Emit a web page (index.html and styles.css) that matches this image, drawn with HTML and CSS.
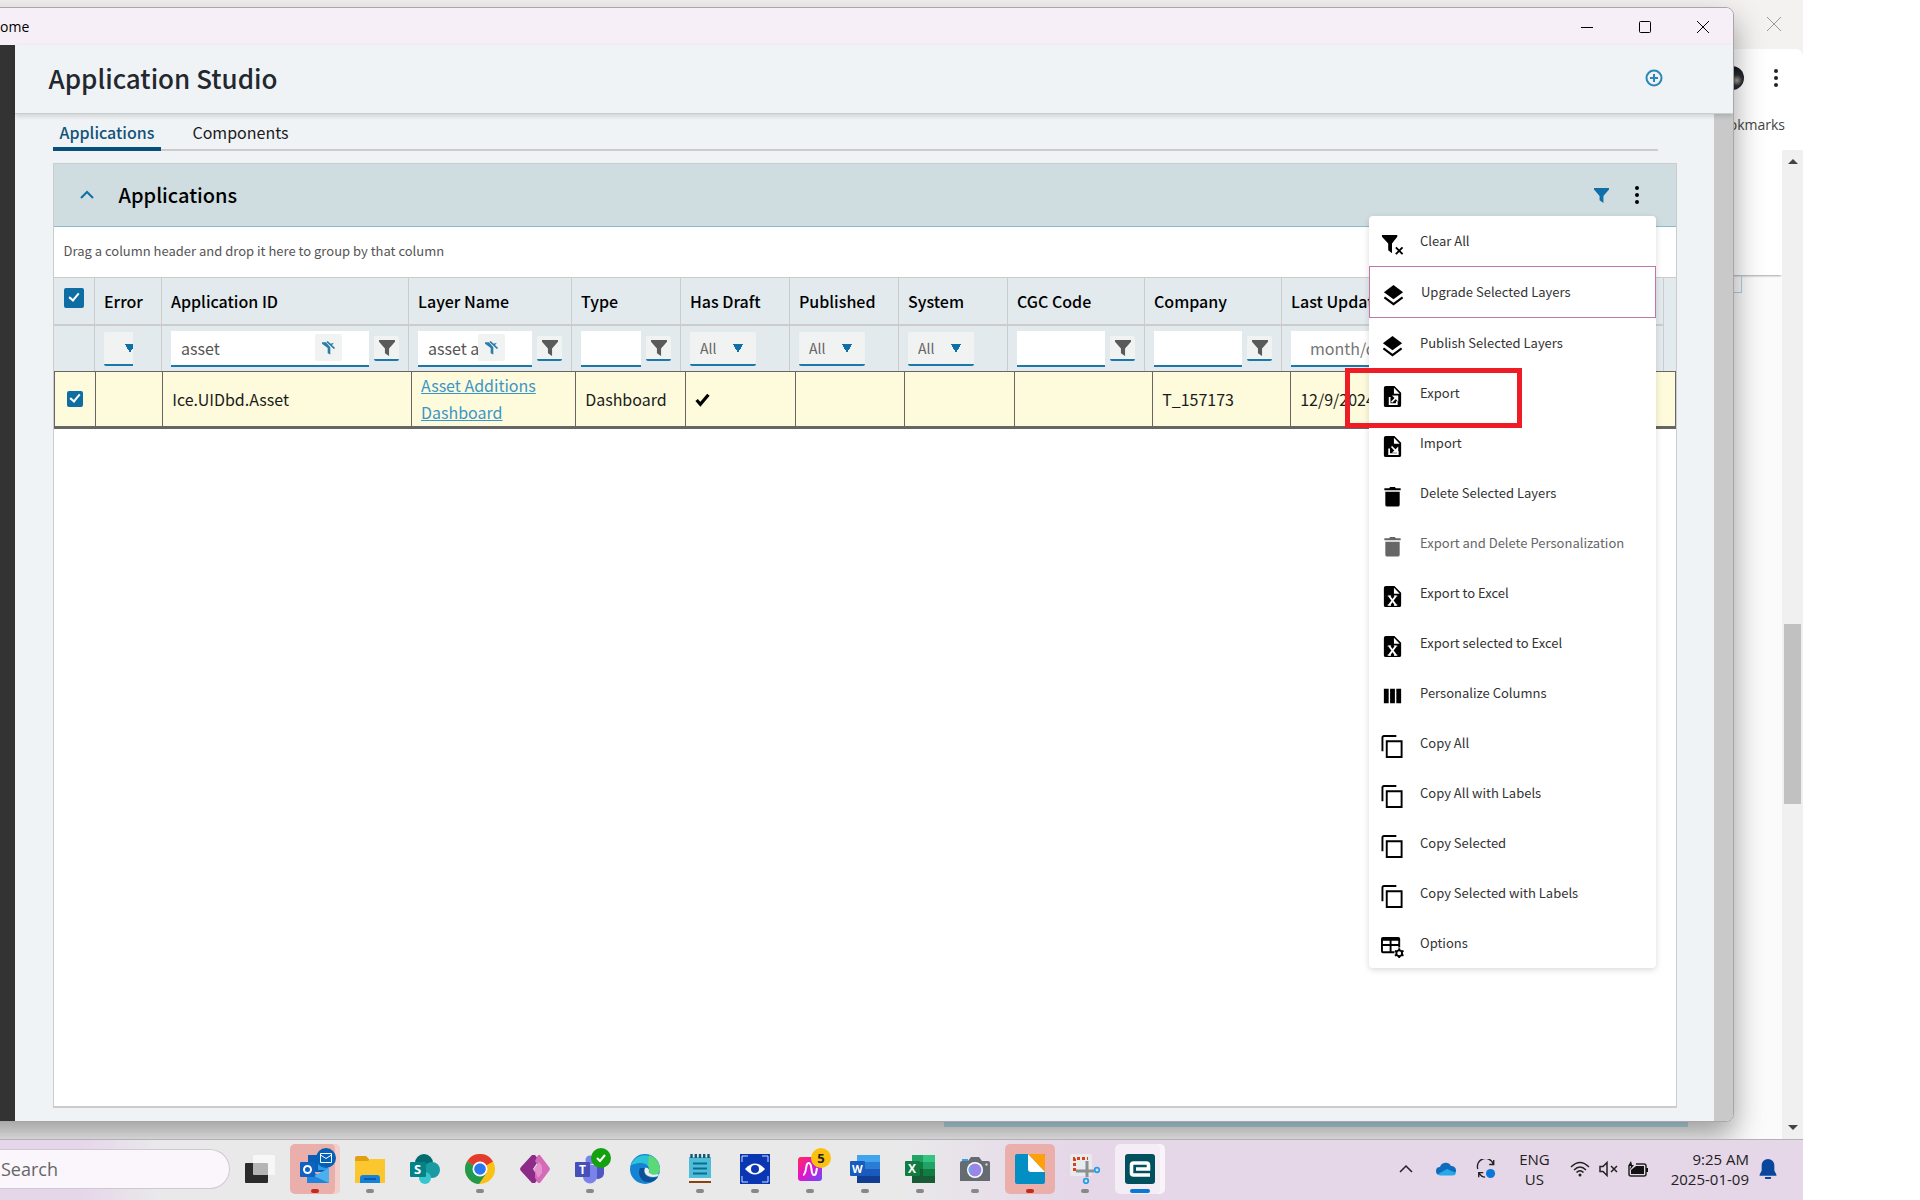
FILE: index.html
```html
<html lang="en">
    <head>
        <meta charset="UTF-8" />
        <meta name="viewport" content="width=device-width, initial-scale=1.0" />
        <title>Application Studio</title>
        <link rel="stylesheet" href="styles.css" />
    </head>
    <body>
        <svg class="sprite">
            <symbol id="filter" viewBox="1 1 14 14">
                <path d="M1 1h14v1.500L9.800 8.500V15L6.200 12.500V8.500L1 2.500z" />
            </symbol>
            <symbol id="clear-filter" viewBox="0 0 16 16">
                <path d="M0 1.500h4.500l5 5.500v8.500l-3-1.500V8L0 3z" />
                <path d="M5 1l1.500-1 8.500 8-1.500 1zM9 3.500L13.500 2l-3 4z" />
            </symbol>
            <symbol id="layers" viewBox="0 0 24 24">
                <path d="M12 1l10 7.500-10 7.500-10-7.500z" />
                <path d="M2.500 14l9.500 7 9.500-7" fill="none" stroke="currentColor" stroke-width="2.200" />
            </symbol>
            <symbol id="file-export" viewBox="0 0 24 24">
                <path fill-rule="evenodd" d="M5 1h9l7 7v13a2 2 0 0 1-2 2H5a2 2 0 0 1-2-2V3a2 2 0 0 1 2-2zm8.500 1.800V9h6z" />
                <path d="M9 12.500v7.500h7.500v-3M11 18l5-5" fill="none" stroke="#fff" stroke-width="1.800" />
                <path d="M11.500 11H18v6.500z" fill="#fff" />
            </symbol>
            <symbol id="file-import" viewBox="0 0 24 24">
                <path fill-rule="evenodd" d="M5 1h9l7 7v13a2 2 0 0 1-2 2H5a2 2 0 0 1-2-2V3a2 2 0 0 1 2-2zm8.500 1.800V9h6z" />
                <path d="M8.500 14v6h9v-3M11 12l5 5" fill="none" stroke="#fff" stroke-width="1.800" />
                <path d="M18 12v6.500h-6.500z" fill="#fff" />
            </symbol>
            <symbol id="file-excel" viewBox="0 0 24 24">
                <path fill-rule="evenodd" d="M5 1h9l7 7v13a2 2 0 0 1-2 2H5a2 2 0 0 1-2-2V3a2 2 0 0 1 2-2zm8.500 1.800V9h6z" />
                <path d="M8.500 11.500l7 9.500M15.500 11.500l-7 9.500" stroke="#fff" stroke-width="2" />
                <path d="M7 11.500h3.500M13.500 11.500H17M7 21h3.500M13.500 21H17" stroke="#fff" stroke-width="1.200" />
            </symbol>
            <symbol id="trash" viewBox="0 0 24 24">
                <path d="M3.500 3.500h5l1-1.500h5l1 1.500h5V5.500h-17zM4.500 7h15v13.500a2 2 0 0 1-2 2h-11a2 2 0 0 1-2-2z" />
            </symbol>
            <symbol id="columns" viewBox="0 0 24 24">
                <path d="M3 4h5v15H3zM9.500 4h5v15h-5zM16 4h5v15h-5z" />
            </symbol>
            <symbol id="copy" viewBox="0 0 24 24">
                <path d="M1.500 17V2.500a1.500 1.500 0 0 1 1.500-1.500h13M6 6.500h15.500V23H6z" fill="none" stroke="currentColor" stroke-width="2" />
            </symbol>
        </svg>

        <div class="desktop">
            <div class="screen">
                <div class="browser">
                    <div class="browser-tabs">
                        <button class="browser-close" aria-label="Close browser">
                            <svg viewBox="0 0 14 14"><path d="M0 0l14 14M14 0L0 14" /></svg>
                        </button>
                    </div>
                    <div class="browser-bar">
                        <span class="avatar"></span>
                        <button class="dots" aria-label="Browser menu"><i></i><i></i><i></i></button>
                    </div>
                    <div class="bookmarks"><span>All Bookmarks</span></div>
                    <div class="browser-page">
                        <div class="page-content">
                            <div class="page-card"></div>
                            <div class="page-field"></div>
                            <div class="page-strip"></div>
                        </div>
                        <div class="scrollbar">
                            <span class="arrow-up"></span>
                            <span class="thumb"></span>
                            <span class="arrow-down"></span>
                        </div>
                    </div>
                </div>

                <div class="window">
                    <div class="title-bar">
                        <span class="window-title">ome</span>
                        <button aria-label="Minimize"><svg viewBox="0 0 14 14"><path d="M1 7.500h12" /></svg></button>
                        <button aria-label="Maximize"><svg viewBox="0 0 14 14"><rect x="1.500" y="1.500" width="11" height="11" rx="1" /></svg></button>
                        <button aria-label="Close"><svg viewBox="0 0 14 14"><path d="M1 1l12 12M13 1L1 13" /></svg></button>
                    </div>
                    <div class="window-body">
                        <div class="side"></div>
                        <div class="main">
                            <header class="page-header">
                                <h1>Application Studio</h1>
                                <button class="add" aria-label="Add">
                                    <svg viewBox="0 0 18 18"><circle cx="9" cy="9" r="7.500" /><path d="M9 5v8M5 9h8" /></svg>
                                </button>
                            </header>
                            <div class="scroll-area">
                                <div class="content">
                                    <nav class="tabs">
                                        <a class="tab active" href="#applications">Applications</a>
                                        <a class="tab" href="#components">Components</a>
                                    </nav>
                                    <section class="panel">
                                        <div class="panel-header">
                                            <button class="collapse" aria-label="Collapse">
                                                <svg viewBox="0 0 16 16"><path d="M2 11l6-6 6 6" /></svg>
                                            </button>
                                            <h2>Applications</h2>
                                            <button class="panel-filter" aria-label="Filter"><svg><use href="#filter" /></svg></button>
                                            <button class="dots" aria-label="More"><i></i><i></i><i></i></button>
                                            <div class="menu">
                                                <button><svg viewBox="0 0 24 24"><path d="M1 2h16v2l-5.500 7v10L7.500 18v-7L1 4z" /><path d="M15.500 15l7 7M22.500 15l-7 7" stroke="currentColor" stroke-width="2" /></svg>Clear All</button>
                                                <button class="focused"><svg><use href="#layers" /></svg>Upgrade Selected Layers</button>
                                                <button><svg><use href="#layers" /></svg>Publish Selected Layers</button>
                                                <button class="marked"><svg><use href="#file-export" /></svg>Export</button>
                                                <button><svg><use href="#file-import" /></svg>Import</button>
                                                <button><svg><use href="#trash" /></svg>Delete Selected Layers</button>
                                                <button disabled><svg><use href="#trash" /></svg>Export and Delete Personalization</button>
                                                <button><svg><use href="#file-excel" /></svg>Export to Excel</button>
                                                <button><svg><use href="#file-excel" /></svg>Export selected to Excel</button>
                                                <button><svg><use href="#columns" /></svg>Personalize Columns</button>
                                                <button><svg><use href="#copy" /></svg>Copy All</button>
                                                <button><svg><use href="#copy" /></svg>Copy All with Labels</button>
                                                <button><svg><use href="#copy" /></svg>Copy Selected</button>
                                                <button><svg><use href="#copy" /></svg>Copy Selected with Labels</button>
                                                <button>
                                                    <svg viewBox="0 0 24 24">
                                                        <path fill-rule="evenodd" d="M2 2h16a2 2 0 0 1 2 2v9h-2v-1.500h-7V17h3v2H2a2 2 0 0 1-2-2V4a2 2 0 0 1 2-2zm0 4v3.500h7V6zm9 0v3.500h7V6zm-9 5.500V17h7v-5.500z" />
                                                        <circle cx="19" cy="19" r="3" fill="none" stroke="currentColor" stroke-width="2" />
                                                        <path d="M19 13.800v2M19 22v2.200M14.500 16.400l1.800 1M21.700 20.600l1.800 1M14.500 21.600l1.800-1M21.700 17.400l1.800-1" stroke="currentColor" stroke-width="2" />
                                                    </svg>Options
                                                </button>
                                            </div>
                                        </div>
                                        <div class="group-hint">Drag a column header and drop it here to group by that column</div>
                                        <div class="grid-head">
                                            <table>
                                                <colgroup>
                                                    <col class="c-check" /><col class="c-error" /><col class="c-id" /><col class="c-layer" />
                                                    <col class="c-flag" /><col class="c-flag" /><col class="c-flag" /><col class="c-flag" />
                                                    <col class="c-code" /><col class="c-code" /><col class="c-updated" />
                                                </colgroup>
                                                <tr class="names">
                                                    <th class="check"><input type="checkbox" class="big" aria-label="Select all" checked /></th>
                                                    <th>Error</th>
                                                    <th>Application ID</th>
                                                    <th>Layer Name</th>
                                                    <th>Type</th>
                                                    <th>Has Draft</th>
                                                    <th>Published</th>
                                                    <th>System</th>
                                                    <th>CGC Code</th>
                                                    <th>Company</th>
                                                    <th>Last Updated</th>
                                                </tr>
                                                <tr class="filters">
                                                    <td></td>
                                                    <td><div class="filter narrow"><select aria-label="Error"><option></option></select></div></td>
                                                    <td>
                                                        <div class="filter">
                                                            <div class="field">
                                                                <input type="text" aria-label="Application ID" value="asset" />
                                                                <button class="clear" aria-label="Clear"><svg><use href="#clear-filter" /></svg></button>
                                                            </div>
                                                            <button class="funnel" aria-label="Filter"><svg><use href="#filter" /></svg></button>
                                                        </div>
                                                    </td>
                                                    <td>
                                                        <div class="filter">
                                                            <div class="field">
                                                                <input type="text" aria-label="Layer Name" value="asset additions" />
                                                                <button class="clear" aria-label="Clear"><svg><use href="#clear-filter" /></svg></button>
                                                            </div>
                                                            <button class="funnel" aria-label="Filter"><svg><use href="#filter" /></svg></button>
                                                        </div>
                                                    </td>
                                                    <td>
                                                        <div class="filter">
                                                            <div class="field"><input type="text" aria-label="Type" /></div>
                                                            <button class="funnel" aria-label="Filter"><svg><use href="#filter" /></svg></button>
                                                        </div>
                                                    </td>
                                                    <td><div class="filter"><select aria-label="Has Draft"><option>All</option></select></div></td>
                                                    <td><div class="filter"><select aria-label="Published"><option>All</option></select></div></td>
                                                    <td><div class="filter"><select aria-label="System"><option>All</option></select></div></td>
                                                    <td>
                                                        <div class="filter">
                                                            <div class="field"><input type="text" aria-label="CGC Code" /></div>
                                                            <button class="funnel" aria-label="Filter"><svg><use href="#filter" /></svg></button>
                                                        </div>
                                                    </td>
                                                    <td>
                                                        <div class="filter">
                                                            <div class="field"><input type="text" aria-label="Company" /></div>
                                                            <button class="funnel" aria-label="Filter"><svg><use href="#filter" /></svg></button>
                                                        </div>
                                                    </td>
                                                    <td><div class="filter date"><div class="field"><input type="text" aria-label="Last Updated" placeholder="month/day/year" /></div></div></td>
                                                </tr>
                                            </table>
                                        </div>
                                        <table class="grid-rows">
                                            <colgroup>
                                                <col class="c-check" /><col class="c-error" /><col class="c-id" /><col class="c-layer" />
                                                <col class="c-flag" /><col class="c-flag" /><col class="c-flag" /><col class="c-flag" />
                                                <col class="c-code" /><col class="c-code" /><col class="c-updated" />
                                            </colgroup>
                                            <tr>
                                                <td class="check"><input type="checkbox" aria-label="Select row" checked /></td>
                                                <td></td>
                                                <td>Ice.UIDbd.Asset</td>
                                                <td><a href="#layer">Asset Additions Dashboard</a></td>
                                                <td>Dashboard</td>
                                                <td><svg class="tick" viewBox="0 0 14 14"><path d="M1.500 7.500l3.500 4 7.500-9" /></svg></td>
                                                <td></td>
                                                <td></td>
                                                <td></td>
                                                <td>T_157173</td>
                                                <td>12/9/2024</td>
                                            </tr>
                                        </table>
                                    </section>
                                </div>
                                <div class="window-scroll"></div>
                            </div>
                        </div>
                    </div>
                </div>
            </div>

            <div class="taskbar">
                <input class="search" type="text" placeholder="Search" aria-label="Search" />
                <div class="apps">
                    <button class="app" aria-label="Task view">
                        <svg viewBox="0 0 30 30"><rect x="0" y="9" width="23" height="20" rx="1" fill="#2b2b2b" /><rect x="8" y="1" width="22" height="20" rx="1" fill="#fff" fill-opacity=".65" /></svg>
                    </button>
                    <button class="app alert stacked running" aria-label="Outlook">
                        <svg viewBox="0 0 30 30"><path d="M8 1h20v17H8z" fill="#0a5fb4" /><path d="M18 7h10v9H18z" fill="#2f9be8" /><path d="M7 14l11 7 11-7v15H7z" fill="#1f86dc" /><path d="M29 14v15L14 22z" fill="#4ab0ee" /><rect y="8" width="15" height="15" rx="1" fill="#0f62c0" /><circle cx="7.500" cy="15.500" r="3.500" fill="none" stroke="#fff" stroke-width="2" /></svg>
                        <span class="badge mail"><svg viewBox="0 0 12 10"><path d="M.5.500h11v9H.5zM.5 2L6 5.500 11.500 2" /></svg></span>
                    </button>
                    <button class="app running" aria-label="File Explorer">
                        <svg viewBox="0 0 30 30"><path d="M0 4a2 2 0 0 1 2-2h9l3 3v6H0z" fill="#e0a012" /><path d="M0 7h13l2-2h15v24H0z" fill="#fcc62f" /><path d="M5 24a3 3 0 0 1 3-3h14a3 3 0 0 1 3 3v5H5z" fill="#1583da" /><path d="M9 25h12" stroke="#0b4d9c" stroke-width="1.500" /></svg>
                    </button>
                    <button class="app" aria-label="SharePoint">
                        <svg viewBox="0 0 30 30"><circle cx="14" cy="9" r="9" fill="#036c70" /><circle cx="22" cy="16" r="8" fill="#1a9ba1" /><circle cx="15" cy="24" r="6" fill="#37c6d0" /><rect y="8" width="16" height="15" rx="1" fill="#038387" /><text x="4" y="20" font-size="13" font-weight="700" fill="#fff">S</text></svg>
                    </button>
                    <button class="app running" aria-label="Chrome">
                        <svg viewBox="0 0 30 30"><circle cx="15" cy="15" r="15" fill="#fbc116" /><path d="M15 15L2 7.500a15 15 0 0 1 26 0z" fill="#e33b2e" /><path d="M15 15L2 7.500A15 15 0 0 0 14 30l7.500-11z" fill="#219a4d" /><circle cx="15" cy="15" r="7.500" fill="#fff" /><circle cx="15" cy="15" r="5.800" fill="#2b77ee" /></svg>
                    </button>
                    <button class="app" aria-label="Power Apps">
                        <svg viewBox="0 0 30 30"><path d="M12 1h3l4 5-6 9 6 9-4 5h-3L1 17a3 3 0 0 1 0-4z" fill="#8c2b88" /><path d="M18 1h2l9 12a3 3 0 0 1 0 4l-9 12h-2l-3-5v-7l4-4-4-6z" fill="#d56bb6" /><path d="M14 15l5-7 3 4v7l-4 5z" fill="#e491cf" /></svg>
                    </button>
                    <button class="app running" aria-label="Teams">
                        <svg viewBox="0 0 30 30"><circle cx="15" cy="6" r="4.500" fill="#7b83eb" /><path d="M20 11h9v9a6 6 0 0 1-9 4z" fill="#4f57c4" /><path d="M8 11h14v11a7 7 0 0 1-14 1z" fill="#7b83eb" /><rect y="8" width="15" height="15" rx="1" fill="#474fb9" /><text x="4" y="20" font-size="12" font-weight="700" fill="#fff">T</text></svg>
                        <span class="badge ok"><svg viewBox="0 0 12 10"><path d="M2 5l3 3 5-6" stroke-width="2" /></svg></span>
                    </button>
                    <button class="app" aria-label="Edge">
                        <svg viewBox="0 0 30 30"><circle cx="15" cy="15" r="15" fill="#1484d2" /><path d="M1 11A15 15 0 0 1 30 15c0 5-4 6-8 6-3 0-4-1-3-3 2-4-2-9-8-9-5 0-9 2-10 2z" fill="#2cc3d8" /><path d="M19 1a15 15 0 0 1 11 14c0 5-4 6-8 6-3 0-4-1-3-3 1-2 0-5-1-6z" fill="#5cd977" /><path d="M10 14c-3 6 1 14 8 14 5 0 8-2 10-5-6 2-13 0-14-5 0-2 1-4 1-4z" fill="#0c4f96" /><path d="M15 14c-2 5 2 9 8 9 3 0 5-1 6-2l-1-1c-3 1-6 1-7 0-3-1-2-2-2-4 0-1-2-3-4-2z" fill="#eee" /></svg>
                    </button>
                    <button class="app running" aria-label="Notepad">
                        <svg viewBox="0 0 30 30"><path d="M4 3h22v23H4z" fill="#4fbcd8" /><path d="M4 26h22v3H4z" fill="#8a4310" /><path d="M4 24h22v3H4z" fill="#f2f2f2" /><path d="M8 9.500h14M8 14.500h14M8 19.500h14" stroke="#0b6c92" stroke-width="2" /><path d="M6.500 0v4M10.800 0v4M15 0v4M19.200 0v4M23.500 0v4" stroke="#15576e" stroke-width="2.400" /></svg>
                    </button>
                    <button class="app running" aria-label="Viewer">
                        <svg viewBox="0 0 30 30"><path d="M0 0h30v30H0z" fill="#0a35b3" /><path d="M2 8V2h6M22 2h6v6M28 22v6h-6M8 28H2v-6" fill="none" stroke="#cfe0ff" /><path d="M5 15q10-11 20 0-10 11-20 0z" fill="#fff" /><circle cx="15" cy="15" r="4" fill="#0a35b3" /></svg>
                    </button>
                    <button class="app running" aria-label="Notes">
                        <svg viewBox="0 0 30 30"><defs><linearGradient id="pink" x1="0" y1="0" x2="1" y2="1"><stop offset="0" stop-color="#ff2d55" /><stop offset=".45" stop-color="#e612c8" /><stop offset="1" stop-color="#6a4cff" /></linearGradient></defs><rect x="3" y="3" width="24" height="24" rx="3" fill="url(#pink)" /><path d="M8 21c4 0 2-13 6-12s1 12 5 12c3 0 2-4 3-7" fill="none" stroke="#fff" stroke-width="2" /></svg>
                        <span class="badge count">5</span>
                    </button>
                    <button class="app running" aria-label="Word">
                        <svg viewBox="0 0 30 30"><path d="M7 1h23v8H7z" fill="#41a5ee" /><path d="M7 8h23v7H7z" fill="#2b7cd3" /><path d="M7 15h23v7H7z" fill="#185abd" /><path d="M7 22h23v7H7z" fill="#103f91" /><rect y="7" width="15" height="15" rx="1" fill="#185abd" /><text x="2" y="19" font-size="11" font-weight="700" fill="#fff">W</text></svg>
                    </button>
                    <button class="app running" aria-label="Excel">
                        <svg viewBox="0 0 30 30"><path d="M7 1h23v28H7z" fill="#21a366" /><path d="M18 1h12v7H18z" fill="#33c481" /><path d="M7 8h11v7H7z" fill="#107c41" /><path d="M7 15h11v14H7zM18 22h12v7H18z" fill="#185c37" /><path d="M18 15h12v7H18z" fill="#107c41" /><rect y="7" width="15" height="15" rx="1" fill="#107c41" /><text x="3" y="19" font-size="12" font-weight="700" fill="#fff">X</text></svg>
                    </button>
                    <button class="app running" aria-label="Camera">
                        <svg viewBox="0 0 30 30"><path d="M2 5h6v4H2z" fill="#2ea3e8" /><path d="M0 9a2 2 0 0 1 2-2h6l3-4h8l3 4h6a2 2 0 0 1 2 2v18H0z" fill="#656b70" /><circle cx="15" cy="16" r="8" fill="#fff" /><circle cx="15" cy="16" r="6.500" fill="#9a85e8" /><path d="M10.500 20.500a6.500 6.500 0 0 1 0-9z" fill="#4fb6ee" /><circle cx="26.500" cy="10.500" r="1.200" fill="#ccc" /></svg>
                    </button>
                    <button class="app alert running" aria-label="Ticket tool">
                        <svg viewBox="0 0 30 30"><rect width="30" height="30" rx="2" fill="#048fc4" /><path d="M13 0h15a2 2 0 0 1 2 2v16z" fill="#ff9f0a" /><path d="M13 0v15a3 3 0 0 0 3 3h14z" fill="#fff" /></svg>
                    </button>
                    <button class="app running" aria-label="Snipping Tool">
                        <svg viewBox="0 0 30 30"><rect width="22" height="22" rx="2" fill="#e9eaec" /><path d="M4.500 17V4.500H18" fill="none" stroke="#d8421b" stroke-width="3" stroke-dasharray="3 2" /><path d="M6 17h18M17 7v16" stroke="#8c8f93" stroke-width="3" /><circle cx="27" cy="16" r="2.300" fill="none" stroke="#1f9ee8" stroke-width="1.700" /><circle cx="16" cy="27" r="2.300" fill="none" stroke="#1f9ee8" stroke-width="1.700" /></svg>
                    </button>
                    <button class="app active stacked" aria-label="Epicor">
                        <svg viewBox="0 0 30 30"><rect width="30" height="30" rx="3" fill="#00505e" /><path d="M25 21H8.500a2 2 0 0 1-2-2V11a2 2 0 0 1 2-2h13a2 2 0 0 1 2 2v4H11" fill="none" stroke="#fff" stroke-width="3.600" /></svg>
                    </button>
                </div>
                <div class="tray">
                    <button aria-label="Show hidden icons"><svg class="thin" viewBox="0 0 20 20"><path d="M4 13l6-6 6 6" /></svg></button>
                    <button aria-label="OneDrive"><svg viewBox="0 0 20 14"><path d="M4 13a4 4 0 0 1 0-8 6 6 0 0 1 11-1 4.500 4.500 0 0 1 1 9z" fill="#0f6cbd" /><path d="M2 12l9-5 9 4a3.500 3.500 0 0 1-3.500 2.500H4A4 4 0 0 1 2 12z" fill="#28a8ea" /></svg></button>
                    <button aria-label="Sync"><svg class="thin" viewBox="0 0 20 22"><path d="M1 11A8.500 8.500 0 0 1 18 5.500M18.500 1v5h-5M2 20v-5h5M2 15q3 5 7 5" /><circle cx="15" cy="16" r="5" fill="#0a78d7" stroke="none" /></svg></button>
                    <button class="lang">ENG<br />US</button>
                    <button class="status" aria-label="Network, sound and battery">
                        <svg class="thin" viewBox="0 0 20 16"><path d="M1 6q9-9 18 0M4 9q6-6 12 0M6.500 11.500q3.500-3.500 7 0" /><circle cx="10" cy="14" r="1.500" fill="#222" stroke="none" /></svg>
                        <svg class="thin" viewBox="0 0 20 16"><path d="M1 5.500h3l4-4v13l-4-4H1zM12 5l6 6M18 5l-6 6" /></svg>
                        <svg viewBox="0 0 20 16"><path d="M1 5v8a2 2 0 0 0 2 2h13a2 2 0 0 0 2-2V5a2 2 0 0 0-2-2H8" fill="none" stroke="#222" stroke-width="1.500" /><path d="M3 9l5-4h8v8H3zM18 7h2v4h-2zM3 0L0 5h3L2 9l4-5H4z" fill="#111" /></svg>
                    </button>
                    <button class="clock">9:25 AM<br />2025-01-09</button>
                    <button aria-label="Notifications"><svg class="bell" viewBox="0 0 16 19"><path d="M8 0a6 6 0 0 1 6 6v5l2 4v1H0v-1l2-4V6a6 6 0 0 1 6-6zM5 17h6a3 3 0 0 1-6 0z" fill="#08479c" /></svg></button>
                </div>
            </div>
        </div>
    </body>
</html>
```
FILE: styles.css
```css
*,
*::after {
    margin: 0;
    padding: 0;
    box-sizing: border-box;
}

body {
    background-color: #ffffff;
    padding-right: 117px;
    overflow: hidden;
    font-family: "Noto Sans CJK SC", "Noto Sans", sans-serif;
    font-size: 16px;
    line-height: 24px;
    color: #1b1b1b;
}

button,
input,
select {
    font: inherit;
    color: inherit;
    border: 0;
    outline: 0;
    background: none;
}

button {
    display: inline-flex;
    align-items: center;
    justify-content: center;
}

svg {
    display: block;
    fill: currentColor;
}

.sprite {
    display: none;
}

.desktop {
    display: flex;
    flex-direction: column;
    height: 100vh;
    overflow: hidden;
}

.screen {
    position: relative;
    flex: 1;
    min-height: 0;
    overflow: hidden;
}

/* browser behind the window */

.browser {
    display: flex;
    flex-direction: column;
    height: 100%;
    background-color: #f3f2f0;
    font-family: "Open Sans", sans-serif;
    font-size: 14px;
    color: #444444;
}

.browser-tabs {
    display: flex;
    justify-content: flex-end;
    height: 49px;
    padding: 0 22px 2px;
}

.browser-close svg {
    width: 14px;
    height: 14px;
    stroke: #999999;
}

.browser-bar {
    display: flex;
    justify-content: flex-end;
    align-items: center;
    gap: 27px;
    height: 58px;
    padding-right: 22px;
    background-color: #ffffff;
    border-top-right-radius: 8px;
}

.avatar {
    width: 24px;
    height: 24px;
    border-radius: 50%;
    background: radial-gradient(circle at 70% 60%, #b0a494 0, #2a2d38 25%, #15161c 60%, #8a7a50 100%);
}

.dots {
    display: flex;
    flex-direction: column;
    gap: 3px;
    width: 10px;
}

.dots i {
    width: 4px;
    height: 4px;
    border-radius: 50%;
    background-color: #222222;
}

.bookmarks {
    height: 43px;
    padding: 6px 18px;
    text-align: right;
    background-color: #ffffff;
}

.browser-page {
    display: flex;
    flex: 1;
    background-color: #fbfbfb;
}

.page-content {
    display: flex;
    flex-direction: column;
    flex: 1;
}

.page-card {
    height: 125px;
    background-color: #ffffff;
    box-shadow: 0 2px 2px -1px rgb(0 0 0 / 35%);
}

.page-field {
    width: 200px;
    height: 18px;
    margin-left: auto;
    margin-right: 40px;
    border: 1px solid #a9d3e6;
    border-top: 0;
}

.page-strip {
    height: 20px;
    margin: auto 94px 12px 944px;
    background-color: #bfe3f1;
}

.scrollbar {
    display: flex;
    flex-direction: column;
    align-items: center;
    width: 21px;
    padding: 9px 0;
    background-color: #f0f0f0;
}

.arrow-up,
.arrow-down {
    border: 5px solid transparent;
}

.arrow-up {
    border-top: 0;
    border-bottom-color: #444444;
}

.arrow-down {
    margin-top: auto;
    border-bottom: 0;
    border-top-color: #444444;
}

.thumb {
    width: 17px;
    height: 180px;
    margin-top: 460px;
    background-color: #c1c1c1;
}

/* application window */

.window {
    position: absolute;
    inset: 7px 69px 17px -40px;
    display: flex;
    flex-direction: column;
    overflow: hidden;
    border: 1px solid #a9a6a9;
    border-radius: 8px;
    background-color: #eff3f6;
    box-shadow: 0 14px 30px rgb(0 0 0 / 38%);
}

.title-bar {
    display: flex;
    align-items: center;
    height: 37px;
    padding-right: 1px;
    background-color: #f6eff8;
    font-family: "Open Sans", sans-serif;
    font-size: 14px;
    color: #000000;
}

.window-title {
    margin-right: auto;
    padding-left: 39px;
}

.title-bar button {
    width: 58px;
    height: 36px;
}

.title-bar svg {
    width: 14px;
    height: 14px;
    fill: none;
    stroke: #000000;
}

.window-body {
    display: flex;
    flex: 1;
    min-height: 0;
}

.side {
    width: 55px;
    background-color: #333333;
}

.main {
    display: flex;
    flex-direction: column;
    flex: 1;
}

.page-header {
    display: flex;
    justify-content: space-between;
    align-items: center;
    z-index: 1;
    height: 69px;
    padding: 0 70px 2px 34px;
    border-bottom: 1px solid #c9ced1;
    background-color: #eff3f6;
    box-shadow: 0 2px 5px rgb(0 0 0 / 15%);
}

h1 {
    font-size: 26px;
    font-weight: 500;
    line-height: 40px;
    color: #22282d;
}

.add svg {
    width: 18px;
    height: 18px;
    fill: none;
    stroke: #2a87b8;
    stroke-width: 2;
}

.scroll-area {
    display: flex;
    flex: 1;
}

.content {
    display: flex;
    flex-direction: column;
    flex: 1;
    padding: 0 37px 13px 38px;
}

.window-scroll {
    width: 19px;
    background-color: #c9c9c9;
}

.tabs {
    display: flex;
    gap: 24px;
    height: 37px;
    margin-right: 19px;
    border-bottom: 2px solid #cccccc;
}

.tab {
    height: 37px;
    padding: 6px 7px;
    color: #1b1b1b;
    text-decoration: none;
}

.tab.active {
    border-bottom: 4px solid #07507a;
    color: #12537a;
    font-weight: 500;
}

.panel {
    display: flex;
    flex-direction: column;
    flex: 1;
    margin-top: 12px;
    border: 1px solid #cccccc;
    border-bottom-width: 2px;
    background-color: #ffffff;
}

.panel-header {
    position: relative;
    display: flex;
    align-items: center;
    height: 63px;
    padding: 0 34px 0 25px;
    border-bottom: 1px solid #86bccb;
    background-color: #cfdce0;
}

.collapse svg {
    width: 16px;
    height: 16px;
    fill: none;
    stroke: #0e70a6;
    stroke-width: 2;
}

h2 {
    margin-left: 24px;
    margin-right: auto;
    font-size: 20px;
    font-weight: 500;
    color: #000000;
}

.panel-filter {
    margin-right: 23px;
    color: #0e70a6;
}

.panel-filter svg {
    width: 15px;
    height: 15px;
}

.panel-header .dots i {
    background-color: #000000;
}

.menu {
    position: absolute;
    top: 52px;
    right: 20px;
    z-index: 2;
    width: 287px;
    border-radius: 4px;
    background-color: #ffffff;
    box-shadow: 0 2px 6px rgb(0 0 0 / 15%);
    font-size: 13px;
}

.menu button {
    position: relative;
    justify-content: flex-start;
    gap: 16px;
    width: 100%;
    height: 50px;
    padding-left: 12px;
    color: #333333;
}

.menu svg {
    width: 23px;
    height: 23px;
    margin-top: 6px;
    color: #000000;
}

.menu .focused {
    height: 52px;
    border: 1px solid #c176a8;
}

.menu button:disabled,
.menu button:disabled svg {
    color: #666666;
}

.menu .marked::after {
    content: "";
    position: absolute;
    z-index: 1;
    top: 0;
    left: -24px;
    width: 177px;
    height: 60px;
    border: 5px solid #ee1c25;
}

.group-hint {
    height: 50px;
    padding: 12px 10px;
    font-size: 13px;
    color: #555555;
}

/* grid */

table {
    width: 100%;
    table-layout: fixed;
    border-collapse: collapse;
}

.c-check {
    width: 41px;
}

.c-error {
    width: 67px;
}

.c-id {
    width: 247px;
}

.c-layer {
    width: 163px;
}

.c-flag {
    width: 109px;
}

.c-code {
    width: 137px;
}

.c-updated {
    width: 382px;
}

.grid-head {
    padding-right: 12px;
    border-top: 1px solid #cccccc;
    background-color: #e2eaee;
}

th {
    height: 47px;
    padding: 0 9px;
    border-right: 1px solid #cccccc;
    border-bottom: 2px solid #cccccc;
    font-weight: 500;
    text-align: left;
    white-space: nowrap;
    color: #000000;
}

.filters td {
    height: 46px;
    border-right: 1px solid #cccccc;
}

.filter {
    display: flex;
    align-items: center;
    gap: 5px;
    padding: 0 9px;
}

.filter.narrow {
    width: 38px;
    padding-right: 0;
    overflow: hidden;
}

.field {
    display: flex;
    align-items: center;
    flex: 1;
    min-width: 0;
    height: 36px;
    border-bottom: 2px solid #1a78ab;
    background-color: #ffffff;
}

.field input {
    flex: 1;
    width: 0;
    min-width: 0;
    padding-left: 10px;
    color: #555555;
}

.date .field input {
    padding-left: 19px;
}

.clear {
    width: 27px;
    height: 27px;
    margin-right: 27px;
    border-radius: 2px;
    background-color: #f1f2f2;
    color: #2a7da8;
}

.clear svg {
    width: 14px;
    height: 14px;
}

.funnel {
    width: 25px;
    height: 25px;
    border-bottom: 2px solid #1a78ab;
    border-radius: 2px;
    background-color: #f1f2f2;
    color: #5a5a5a;
}

.funnel svg {
    width: 16px;
    height: 16px;
}

select {
    appearance: none;
    width: 66px;
    height: 34px;
    padding-left: 10px;
    border-bottom: 2px solid #1a78ab;
    border-radius: 2px;
    background-color: #f1f2f2;
    background-image: linear-gradient(to bottom right, transparent 50%, transparent 51%), linear-gradient(to bottom left, #0e70a6 50%, transparent 51%);
    background-image: linear-gradient(to bottom right, #0e70a6 50%, transparent 51%), linear-gradient(to bottom left, #0e70a6 50%, transparent 51%);
    background-repeat: no-repeat;
    background-size: 5px 9px;
    background-position: 48px 12px, 43px 12px;
    font-size: 14px;
    color: #666666;
}

.narrow select {
    flex: none;
    background-position: 26px 12px, 21px 12px;
}

.grid-rows {
    border: 1px solid #666666;
    border-bottom-width: 3px;
    background-color: #fefbdc;
}

.grid-rows td {
    height: 56px;
    padding: 0 9px;
    border-right: 1px solid #666666;
    line-height: 27px;
}

.grid-rows a {
    color: #3a96c8;
}

.check {
    text-align: center;
}

input[type="checkbox"] {
    appearance: none;
    display: block;
    width: 16px;
    height: 16px;
    margin: 0 auto;
    border-radius: 2px;
    background-color: #0e6da3;
}

input[type="checkbox"]::before {
    content: "";
    display: block;
    width: 4px;
    height: 8px;
    margin: 1px auto;
    border: solid #ffffff;
    border-width: 0 2px 2px 0;
    transform: rotate(40deg);
}

input[type="checkbox"].big {
    width: 20px;
    height: 20px;
    padding-top: 2px;
    margin-bottom: 6px;
}

.tick {
    width: 15px;
    height: 15px;
    fill: none;
    stroke: #000000;
    stroke-width: 3;
}

/* taskbar */

.taskbar {
    display: flex;
    align-items: center;
    height: 61px;
    padding-bottom: 2px;
    border-top: 1px solid #b5b0b6;
    background: linear-gradient(to right, #e6d6ea 0, #e6d6ea 80px, #e9e9ea 160px, #e9e9ea 50%, #e5d6e8 60%, #e5d6e8 100%);
    font-family: "Open Sans", sans-serif;
    font-size: 15px;
    line-height: 20px;
    color: #222222;
}

.search {
    width: 230px;
    height: 40px;
    padding-left: 1px;
    border: 1px solid #cfcad0;
    border-left: 0;
    border-radius: 0 20px 20px 0;
    background-color: #faf6fb;
    font-size: 18px;
}

.search::placeholder {
    color: #666666;
}

.apps {
    display: flex;
    gap: 5px;
    margin-left: 5px;
}

.app {
    position: relative;
    width: 50px;
    height: 50px;
    border-radius: 5px;
}

.app > svg {
    width: 30px;
    height: 30px;
}

.app.alert {
    background-color: #ebafab;
}

.app.active {
    background-color: #f4edf6;
}

.app.stacked {
    box-shadow: inset -6px 0 0 -1px rgb(255 255 255 / 40%);
}

.app.running::after,
.app.active::after {
    content: "";
    position: absolute;
    bottom: 1px;
    left: 21px;
    width: 8px;
    height: 4px;
    border-radius: 2px;
    background-color: #888888;
}

.app.alert::after {
    background-color: #c42b1c;
}

.app.active::after {
    left: 15px;
    width: 20px;
    background-color: #0a78d7;
}

.badge {
    position: absolute;
    top: 4px;
    right: 4px;
    display: flex;
    align-items: center;
    justify-content: center;
    width: 20px;
    height: 20px;
    border-radius: 50%;
}

.badge svg {
    width: 12px;
    height: 10px;
    fill: none;
    stroke: #ffffff;
}

.mail {
    background-color: #0560b8;
}

.ok {
    background-color: #13a10e;
}

.count {
    background-color: #fcc10f;
    font-size: 13px;
    font-weight: 700;
}

.tray {
    display: flex;
    align-items: center;
    gap: 20px;
    margin-left: auto;
    padding-right: 25px;
}

.tray svg {
    width: 20px;
    height: 20px;
}

.tray .thin {
    fill: none;
    stroke: #222222;
    stroke-width: 1.5;
}

.lang {
    margin-left: 3px;
}

.status {
    gap: 9px;
}

.clock {
    margin-left: 3px;
    margin-right: -11px;
    text-align: right;
}
```
